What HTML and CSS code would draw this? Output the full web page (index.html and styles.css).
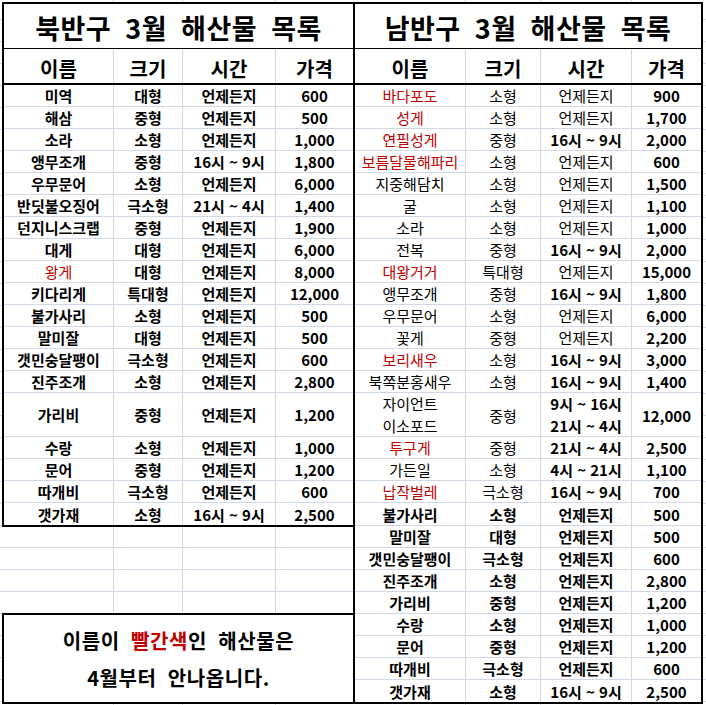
FILE: index.html
```html
<!DOCTYPE html>
<html lang="ko">
<head>
<meta charset="utf-8">
<title>3월 해산물 목록</title>
<link rel="stylesheet" href="styles.css">
</head>
<body>
<div class="sheet">
  <div class="left">
    <section class="table north">
      <div class="title">북반구 3월 해산물 목록</div>
      <div class="row head"><span>이름</span><span>크기</span><span>시간</span><span>가격</span></div>
      <div class="row"><span>미역</span><span>대형</span><span>언제든지</span><span class="n">600</span></div>
      <div class="row"><span>해삼</span><span>중형</span><span>언제든지</span><span class="n">500</span></div>
      <div class="row"><span>소라</span><span>소형</span><span>언제든지</span><span class="n">1,000</span></div>
      <div class="row"><span>앵무조개</span><span>중형</span><span class="n">16시 ~ 9시</span><span class="n">1,800</span></div>
      <div class="row"><span>우무문어</span><span>소형</span><span>언제든지</span><span class="n">6,000</span></div>
      <div class="row"><span>반딧불오징어</span><span>극소형</span><span class="n">21시 ~ 4시</span><span class="n">1,400</span></div>
      <div class="row"><span>던지니스크랩</span><span>중형</span><span>언제든지</span><span class="n">1,900</span></div>
      <div class="row"><span>대게</span><span>대형</span><span>언제든지</span><span class="n">6,000</span></div>
      <div class="row"><span class="red">왕게</span><span>대형</span><span>언제든지</span><span class="n">8,000</span></div>
      <div class="row"><span>키다리게</span><span>특대형</span><span>언제든지</span><span class="n">12,000</span></div>
      <div class="row"><span>불가사리</span><span>소형</span><span>언제든지</span><span class="n">500</span></div>
      <div class="row"><span>말미잘</span><span>대형</span><span>언제든지</span><span class="n">500</span></div>
      <div class="row"><span>갯민숭달팽이</span><span>극소형</span><span>언제든지</span><span class="n">600</span></div>
      <div class="row"><span>진주조개</span><span>소형</span><span>언제든지</span><span class="n">2,800</span></div>
      <div class="row double"><span>가리비</span><span>중형</span><span>언제든지</span><span class="n">1,200</span></div>
      <div class="row"><span>수랑</span><span>소형</span><span>언제든지</span><span class="n">1,000</span></div>
      <div class="row"><span>문어</span><span>중형</span><span>언제든지</span><span class="n">1,200</span></div>
      <div class="row"><span>따개비</span><span>극소형</span><span>언제든지</span><span class="n">600</span></div>
      <div class="row"><span>갯가재</span><span>소형</span><span class="n">16시 ~ 9시</span><span class="n">2,500</span></div>
    </section>
    <div class="blank"></div>
    <div class="notice">
      <p>이름이 <span class="red">빨간색</span>인 해산물은</p>
      <p>4월부터 안나옵니다.</p>
    </div>
  </div>
  <section class="table south">
    <div class="title">남반구 3월 해산물 목록</div>
    <div class="row head"><span>이름</span><span>크기</span><span>시간</span><span>가격</span></div>
    <div class="row"><span class="red">바다포도</span><span>소형</span><span>언제든지</span><span class="n">900</span></div>
    <div class="row"><span class="red">성게</span><span>소형</span><span>언제든지</span><span class="n">1,700</span></div>
    <div class="row"><span class="red">연필성게</span><span>중형</span><span class="n">16시 ~ 9시</span><span class="n">2,000</span></div>
    <div class="row"><span class="red">보름달물해파리</span><span>소형</span><span>언제든지</span><span class="n">600</span></div>
    <div class="row"><span>지중해담치</span><span>소형</span><span>언제든지</span><span class="n">1,500</span></div>
    <div class="row"><span>굴</span><span>소형</span><span>언제든지</span><span class="n">1,100</span></div>
    <div class="row"><span>소라</span><span>소형</span><span>언제든지</span><span class="n">1,000</span></div>
    <div class="row"><span>전복</span><span>중형</span><span class="n">16시 ~ 9시</span><span class="n">2,000</span></div>
    <div class="row"><span class="red">대왕거거</span><span>특대형</span><span>언제든지</span><span class="n">15,000</span></div>
    <div class="row"><span>앵무조개</span><span>중형</span><span class="n">16시 ~ 9시</span><span class="n">1,800</span></div>
    <div class="row"><span>우무문어</span><span>소형</span><span>언제든지</span><span class="n">6,000</span></div>
    <div class="row"><span>꽃게</span><span>중형</span><span>언제든지</span><span class="n">2,200</span></div>
    <div class="row"><span class="red">보리새우</span><span>소형</span><span class="n">16시 ~ 9시</span><span class="n">3,000</span></div>
    <div class="row"><span>북쪽분홍새우</span><span>소형</span><span class="n">16시 ~ 9시</span><span class="n">1,400</span></div>
    <div class="row double"><span class="two">자이언트<br>이소포드</span><span>중형</span><span class="n two">9시 ~ 16시<br>21시 ~ 4시</span><span class="n">12,000</span></div>
    <div class="row"><span class="red">투구게</span><span>중형</span><span class="n">21시 ~ 4시</span><span class="n">2,500</span></div>
    <div class="row"><span>가든일</span><span>소형</span><span class="n">4시 ~ 21시</span><span class="n">1,100</span></div>
    <div class="row"><span class="red">납작벌레</span><span>극소형</span><span class="n">16시 ~ 9시</span><span class="n">700</span></div>
    <div class="row tall cp"><span>불가사리</span><span>소형</span><span>언제든지</span><span class="n">500</span></div>
    <div class="row cp"><span>말미잘</span><span>대형</span><span>언제든지</span><span class="n">500</span></div>
    <div class="row cp"><span>갯민숭달팽이</span><span>극소형</span><span>언제든지</span><span class="n">600</span></div>
    <div class="row cp"><span>진주조개</span><span>소형</span><span>언제든지</span><span class="n">2,800</span></div>
    <div class="row cp"><span>가리비</span><span>중형</span><span>언제든지</span><span class="n">1,200</span></div>
    <div class="row cp"><span>수랑</span><span>소형</span><span>언제든지</span><span class="n">1,000</span></div>
    <div class="row cp"><span>문어</span><span>중형</span><span>언제든지</span><span class="n">1,200</span></div>
    <div class="row cp"><span>따개비</span><span>극소형</span><span>언제든지</span><span class="n">600</span></div>
    <div class="row cp"><span>갯가재</span><span>소형</span><span class="n">16시 ~ 9시</span><span class="n">2,500</span></div>
  </section>
</div>
</body>
</html>
```

FILE: styles.css
```css
* {
  box-sizing: border-box;
  margin: 0;
  padding: 0;
}

html,
body {
  width: 706px;
  height: 705px;
  overflow: hidden;
}

body {
  background-color: #ffffff;
  background-image:
    linear-gradient(#d0d7e5, #d0d7e5),
    linear-gradient(#d0d7e5, #d0d7e5),
    linear-gradient(#d0d7e5, #d0d7e5),
    linear-gradient(#d0d7e5, #d0d7e5),
    linear-gradient(#d0d7e5, #d0d7e5),
    linear-gradient(#d0d7e5, #d0d7e5),
    repeating-linear-gradient(to bottom, transparent 0 19px, #d0d7e5 19px 20px, transparent 20px 22px);
  background-size: 1px 100%, 1px 100%, 1px 100%, 1px 100%, 1px 100%, 1px 100%, 100% 100%;
  background-position: 113px 0, 182px 0, 275px 0, 465px 0, 540px 0, 631px 0, 0 0;
  background-repeat: no-repeat;
  font-family: "Noto Sans CJK KR", "Noto Sans", sans-serif;
  color: #000000;
}

.sheet {
  display: flex;
  align-items: flex-start;
  padding: 2px 0 0 2px;
}

.left {
  width: 353px;
  display: flex;
  flex-direction: column;
}

.table {
  border: 2px solid #000000;
  background: #ffffff;
}

.north {
  width: 353px;
}

.south {
  width: 350px;
  margin-left: -2px;
}

.title {
  height: 45px;
  border-bottom: 1px solid #000000;
  display: flex;
  align-items: center;
  justify-content: center;
  padding-top: 3px;
  font-size: 27px;
  font-weight: 700;
  letter-spacing: 0.5px;
  word-spacing: 6px;
  line-height: 1;
}

.row {
  display: grid;
  height: 22px;
  border-bottom: 1px solid #d0d7e5;
  font-size: 15px;
  line-height: 1;
}

.north .row {
  grid-template-columns: 110px 69px 93px 77px;
  font-weight: 700;
}

.south .row {
  grid-template-columns: 111px 75px 91px 69px;
}

.south .row.cp {
  font-weight: 700;
}

.row > span {
  display: flex;
  align-items: center;
  justify-content: center;
  text-align: center;
  border-right: 1px solid #d0d7e5;
  white-space: nowrap;
}

.row > span:last-child {
  border-right: 0;
}

.row:last-child {
  border-bottom: 0;
}

.row.head {
  height: 36px;
  border-bottom: 2px solid #000000;
  font-size: 20px;
  font-weight: 700;
}

.row.head > span {
  padding-top: 5px;
}

.row.double {
  height: 44px;
}

.row.tall {
  height: 23px;
}

.row > .two {
  line-height: 22px;
}

.row > .n {
  font-weight: 700;
}

.row > .red {
  color: #c00000;
  font-weight: 400;
}

.blank {
  height: 86px;
}

.notice {
  height: 91px;
  border: 2px solid #000000;
  background: #ffffff;
  display: flex;
  flex-direction: column;
  justify-content: center;
  align-items: center;
  padding-top: 1px;
  font-size: 20px;
  font-weight: 700;
  line-height: 37px;
  letter-spacing: 0.6px;
  word-spacing: 5px;
}

.notice .red {
  color: #c00000;
}
```
